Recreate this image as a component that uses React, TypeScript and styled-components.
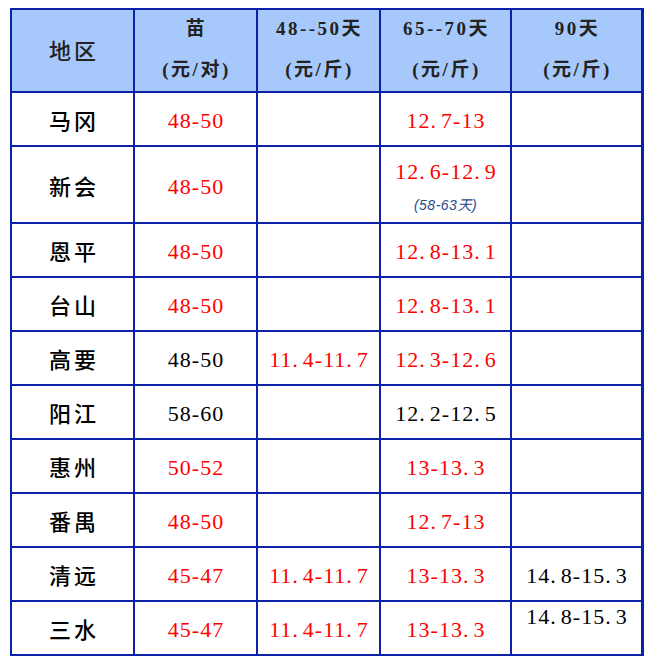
import React from 'react';
import styled, { createGlobalStyle } from 'styled-components';

const GlobalStyle = createGlobalStyle`
  body {
    margin: 0;
    background: #fff;
  }
`;

type Row = {
  region: string;
  seedling: string;
  seedlingRed: boolean;
  d50?: string;
  d70?: string;
  d70Red?: boolean;
  d70Note?: string;
  d90?: string;
  d90Top?: boolean;
};

type Align = 'center' | 'top' | 'note';

const rows: Row[] = [
  { region: '马冈', seedling: '48-50', seedlingRed: true, d70: '12.7-13', d70Red: true },
  { region: '新会', seedling: '48-50', seedlingRed: true, d70: '12.6-12.9', d70Red: true, d70Note: '(58-63天)' },
  { region: '恩平', seedling: '48-50', seedlingRed: true, d70: '12.8-13.1', d70Red: true },
  { region: '台山', seedling: '48-50', seedlingRed: true, d70: '12.8-13.1', d70Red: true },
  { region: '高要', seedling: '48-50', seedlingRed: false, d50: '11.4-11.7', d70: '12.3-12.6', d70Red: true },
  { region: '阳江', seedling: '58-60', seedlingRed: false, d70: '12.2-12.5', d70Red: false },
  { region: '惠州', seedling: '50-52', seedlingRed: true, d70: '13-13.3', d70Red: true },
  { region: '番禺', seedling: '48-50', seedlingRed: true, d70: '12.7-13', d70Red: true },
  { region: '清远', seedling: '45-47', seedlingRed: true, d50: '11.4-11.7', d70: '13-13.3', d70Red: true, d90: '14.8-15.3' },
  { region: '三水', seedling: '45-47', seedlingRed: true, d50: '11.4-11.7', d70: '13-13.3', d70Red: true, d90: '14.8-15.3', d90Top: true },
];

// the source sheet prints decimals with a wide full stop, so give the dot some room
const Amount = ({ value, red }: { value: string; red?: boolean }) => {
  const parts = value.split('.');
  return (
    <Price $red={red}>
      {parts.map((part, i) => (
        <React.Fragment key={i}>
          {i > 0 && <Dot>.</Dot>}
          {part}
        </React.Fragment>
      ))}
    </Price>
  );
};

export default function App() {
  return (
    <Page>
      <GlobalStyle />
      <Table>
        <HeadCell>
          <RegionTitle>地区</RegionTitle>
        </HeadCell>
        <HeadCell>
          <HeadLine>苗</HeadLine>
          <HeadLine>(元/对)</HeadLine>
        </HeadCell>
        <HeadCell>
          <HeadLine>48--50天</HeadLine>
          <HeadLine>(元/斤)</HeadLine>
        </HeadCell>
        <HeadCell>
          <HeadLine>65--70天</HeadLine>
          <HeadLine>(元/斤)</HeadLine>
        </HeadCell>
        <HeadCell>
          <HeadLine>90天</HeadLine>
          <HeadLine>(元/斤)</HeadLine>
        </HeadCell>

        {rows.map((row) => (
          <React.Fragment key={row.region}>
            <Cell>
              <Region>{row.region}</Region>
            </Cell>
            <Cell>
              <Amount value={row.seedling} red={row.seedlingRed} />
            </Cell>
            <Cell>{row.d50 && <Amount value={row.d50} red />}</Cell>
            <Cell $align={row.d70Note ? 'note' : 'center'}>
              {row.d70 && <Amount value={row.d70} red={row.d70Red} />}
              {row.d70Note && <Note>{row.d70Note}</Note>}
            </Cell>
            <Cell $align={row.d90Top ? 'top' : 'center'}>
              {row.d90 && <Amount value={row.d90} />}
            </Cell>
          </React.Fragment>
        ))}
      </Table>
    </Page>
  );
}

const Page = styled.div`
  padding: 8px 0 0 10px;
`;

const Table = styled.div`
  display: inline-grid;
  grid-template-columns: 121px 121px 121px 129px 129px;
  grid-template-rows: 81px 52px 75px repeat(8, 52px);
  gap: 2px;
  padding: 2px 3px 2px 2px;
  background: #0b22a8;
`;

const HeadCell = styled.div`
  display: flex;
  flex-direction: column;
  align-items: center;
  justify-content: center;
  padding-bottom: 3px;
  background: #a6c8fa;
  color: #222;
`;

const HeadLine = styled.div`
  font-family: 'Liberation Serif', 'Noto Sans CJK SC', serif;
  font-size: 19px;
  font-weight: bold;
  line-height: 41px;
  letter-spacing: 2.5px;
  padding-left: 2px;
  white-space: nowrap;
`;

const RegionTitle = styled.div`
  font-family: 'Noto Sans CJK SC', sans-serif;
  font-size: 22px;
  font-weight: 500;
  letter-spacing: 3px;
  padding-left: 3px;
`;

const cellPadding: Record<Align, string> = {
  center: '4px',
  top: '2px',
  note: '12px',
};

const Cell = styled.div<{ $align?: Align }>`
  display: flex;
  flex-direction: column;
  align-items: center;
  justify-content: ${({ $align = 'center' }) => ($align === 'center' ? 'center' : 'flex-start')};
  padding-top: ${({ $align = 'center' }) => cellPadding[$align]};
  background: #fff;
`;

const Region = styled.div`
  font-family: 'Noto Sans CJK SC', sans-serif;
  font-size: 22px;
  font-weight: 500;
  letter-spacing: 3px;
  padding-left: 3px;
  color: #000;
  margin-top: -4px;
`;

const Price = styled.div<{ $red?: boolean }>`
  font-family: 'Liberation Serif', serif;
  font-size: 22px;
  line-height: 26px;
  letter-spacing: 1px;
  padding-left: 1px;
  white-space: nowrap;
  color: ${({ $red }) => ($red ? '#ff0000' : '#000')};
`;

const Dot = styled.span`
  margin-right: 4px;
`;

const Note = styled.div`
  margin-top: 12px;
  font-family: 'Liberation Sans', 'Noto Sans CJK SC', sans-serif;
  font-size: 14px;
  font-style: italic;
  line-height: 16px;
  letter-spacing: 0.5px;
  color: #2b4a8c;
`;
